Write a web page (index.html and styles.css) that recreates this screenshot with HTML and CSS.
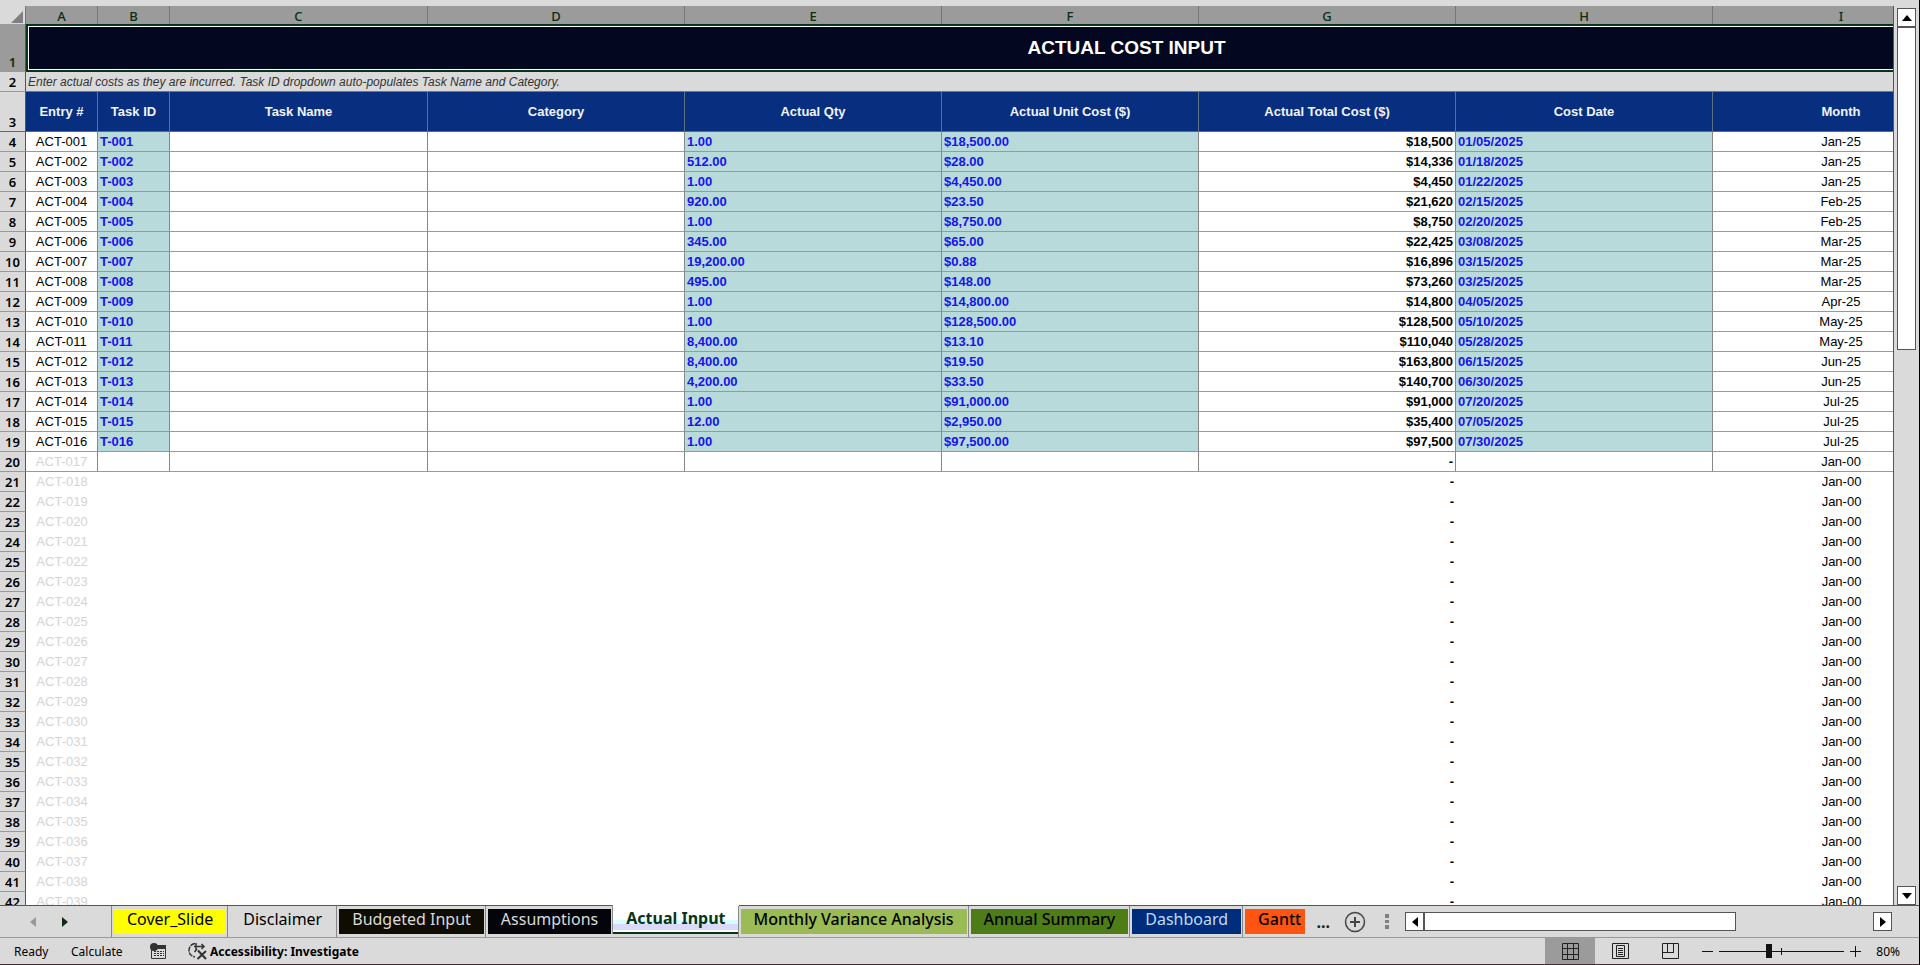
FILE: index.html
```html
<!DOCTYPE html>
<html lang="en">
<head>
    <meta charset="UTF-8">
    <meta name="viewport" content="width=device-width, initial-scale=1.0">
    <title>Actual Cost Input</title>
    <link rel="stylesheet" href="styles.css">
</head>
<body>
    <div class="workbook">
        <div class="main">
            <div class="sheet">
                <table class="grid">
                    <colgroup>
                        <col class="col-num">
                        <col class="col-id">
                        <col class="col-id">
                        <col class="col-name">
                        <col class="col-wide" span="7">
                    </colgroup>
                    <thead>
                        <tr class="letters">
                            <th class="corner"><svg width="12" height="12" viewBox="0 0 12 12"><path d="M12 0V12H0Z" fill="#808080"/></svg></th>
                            <th>A</th><th>B</th><th>C</th><th>D</th><th>E</th><th>F</th><th>G</th><th>H</th><th>I</th><th></th>
                        </tr>
                    </thead>
                    <tbody id="rows">
                        <tr class="title-row">
                            <th class="num active">1</th>
                            <td colspan="10">ACTUAL COST INPUT</td>
                        </tr>
                        <tr class="note-row">
                            <th class="num">2</th>
                            <td colspan="10">Enter actual costs as they are incurred. Task ID dropdown auto-populates Task Name and Category.</td>
                        </tr>
                        <tr class="head-row">
                            <th class="num">3</th>
                            <th>Entry #</th><th>Task ID</th><th>Task Name</th><th>Category</th><th>Actual Qty</th>
                            <th>Actual Unit Cost ($)</th><th>Actual Total Cost ($)</th><th>Cost Date</th><th>Month</th><th></th>
                        </tr>
                    </tbody>
                </table>
            </div>
            <div class="vscroll">
                <button class="arrow" aria-label="Scroll up"><svg width="10" height="6" viewBox="0 0 10 6"><path d="M5 0L10 6H0Z"/></svg></button>
                <div class="thumb"></div>
                <button class="arrow down" aria-label="Scroll down"><svg width="10" height="6" viewBox="0 0 10 6"><path d="M0 0H10L5 6Z"/></svg></button>
            </div>
        </div>

        <div class="tabbar">
            <div class="tab-nav">
                <button aria-label="Previous sheet"><svg width="6" height="10" viewBox="0 0 6 10"><path d="M6 0V10L0 5Z" fill="#999"/></svg></button>
                <button aria-label="Next sheet"><svg width="6" height="10" viewBox="0 0 6 10"><path d="M0 0V10L6 5Z" fill="#0b2b12"/></svg></button>
            </div>
            <div class="tabs">
                <button class="tab yellow">Cover_Slide</button>
                <button class="tab">Disclaimer</button>
                <button class="tab olive">Budgeted Input</button>
                <button class="tab black">Assumptions</button>
                <button class="tab current">Actual Input</button>
                <button class="tab lime">Monthly Variance Analysis</button>
                <button class="tab green">Annual Summary</button>
                <button class="tab navy">Dashboard</button>
                <button class="tab orange">Gantt</button>
            </div>
            <button class="more" aria-label="More sheets">...</button>
            <button class="add" aria-label="New sheet"><svg width="22" height="22" viewBox="0 0 22 22" fill="none" stroke="#444"><circle cx="11" cy="11" r="9.5" stroke-width="1.5"/><path d="M11 6V16M6 11H16" stroke-width="2"/></svg></button>
            <svg class="grip" width="4" height="15" viewBox="0 0 4 15" fill="#808080"><path d="M0 0H4V4H0ZM0 6H4V9H0ZM0 11H4V15H0Z"/></svg>
            <div class="hscroll">
                <button class="arrow" aria-label="Scroll left"><svg width="6" height="10" viewBox="0 0 6 10"><path d="M6 0V10L0 5Z"/></svg></button>
                <div class="thumb"></div>
                <button class="arrow right" aria-label="Scroll right"><svg width="6" height="10" viewBox="0 0 6 10"><path d="M0 0V10L6 5Z"/></svg></button>
            </div>
        </div>

        <div class="status">
            <span class="ready">Ready</span>
            <span class="calc">Calculate</span>
            <button class="macro" aria-label="Record macro"><svg width="16" height="16" viewBox="0 0 16 16"><path d="M4 2.5H15.5V15.5H1.500V7" fill="none" stroke="#333"/><path d="M6 2H16V6H6Z" fill="#333"/><circle cx="4" cy="4" r="4" fill="#333"/><path d="M4 8.500H14M4 10.500H14M4 12.500H14" stroke="#333" stroke-dasharray="2 1"/></svg></button>
            <button class="access">
                <svg width="20" height="18" viewBox="0 0 20 18" fill="none" stroke="#333"><path d="M7 1.500C3 2 1 5 1 8.500S3.500 14.500 7 15" stroke-width="1.500" stroke-dasharray="5 1"/><path d="M8 1V8M6 4.500H16M13.500 2L16 4.500L13.500 7M6.500 10L9 7" stroke-width="1.500"/><path d="M10 8.500L18 17M18 9L9.500 17" stroke-width="2"/></svg>
                Accessibility: Investigate
            </button>
            <div class="views">
                <button class="on" aria-label="Normal view"><svg width="17" height="17" viewBox="0 0 17 17" fill="none" stroke="#222"><path d="M.5 .5H16.500V16.500H.5ZM5.500 0V17M11.500 0V17M0 5.500H17M0 11.500H17"/></svg></button>
                <button aria-label="Page layout"><svg width="17" height="16" viewBox="0 0 17 16" fill="none" stroke="#222"><path d="M.5 .5H16.500V15.500H.5ZM4.500 2.500H12.500V13.500H4.500ZM6 5.500H11M6 7.500H11M6 9.500H11M6 11.500H11"/></svg></button>
                <button aria-label="Page break preview"><svg width="17" height="16" viewBox="0 0 17 16" fill="none" stroke="#222"><path d="M.5 .5H16.500V15.500H.5ZM5.500 1V9.500H11.500M11.500 1V10M0 9.500H6"/></svg></button>
            </div>
            <div class="zoom">
                <button aria-label="Zoom out"><svg width="11" height="11" viewBox="0 0 11 11"><path d="M0 5.500H11" stroke="#111"/></svg></button>
                <input type="range" min="10" max="190" value="81" aria-label="Zoom">
                <button aria-label="Zoom in"><svg width="11" height="11" viewBox="0 0 11 11"><path d="M0 5.500H11M5.500 0V11" stroke="#111"/></svg></button>
                <span class="percent">80%</span>
            </div>
        </div>
    </div>

    <script src="script.js"></script>
</body>
</html>
```

FILE: styles.css
```css
* {
    box-sizing: border-box;
}
body {
    margin: 0;
    background-color: #dadada;
    font-family: "Liberation Sans", Arial, sans-serif;
    font-size: 13px;
    color: #000;
}
button {
    margin: 0;
    padding: 0;
    border: 0;
    background: none;
    font: inherit;
    color: inherit;
    display: flex;
    align-items: center;
    justify-content: center;
}
.workbook {
    height: 100vh;
    display: flex;
    flex-direction: column;
    overflow: hidden;
    border-right: 1px solid #000;
    border-bottom: 1px solid #442a33;
}
.main {
    flex: 1;
    min-height: 0;
    display: flex;
    padding-top: 6px;
    border-bottom: 1px solid #555;
}

/* Grid */
.sheet {
    flex: 1;
    min-width: 0;
    overflow: hidden;
    background-color: #fff;
    border-right: 1px solid #555;
}
.grid {
    table-layout: fixed;
    width: 2227px;
    border-collapse: separate;
    border-spacing: 0;
}
.col-num {
    width: 26px;
}
.col-id {
    width: 72px;
}
.col-name {
    width: 258px;
}
.col-wide {
    width: 257px;
}
.grid th,
.grid td {
    height: 20px;
    padding: 0 2px;
    line-height: 18px;
    white-space: nowrap;
    overflow: hidden;
}
.grid .letters th {
    height: 18px;
    padding: 2px 0 0;
    line-height: 16px;
    background-color: #9b9b9b;
    border-right: 1px solid #777;
    font-family: "Noto Sans", sans-serif;
    font-weight: 500;
    color: #0b2b12;
}
.grid .letters .corner {
    padding: 3px 2px 0 0;
    background-color: #dadada;
    text-align: right;
    line-height: 0;
}
.grid .num {
    padding: 0;
    background-color: #dadada;
    border-right: 1px solid #555;
    border-bottom: 1px solid #999;
    font-family: "Noto Sans", sans-serif;
    font-weight: 600;
    vertical-align: bottom;
}
.grid .num.active {
    background-color: #9b9b9b;
    color: #0b2b12;
}
.grid .title-row td {
    height: 48px;
    background-color: #030720;
    border: 2px solid #06351a;
    box-shadow: inset 0 0 0 1px #fff;
    text-align: center;
    font-size: 19px;
    font-weight: bold;
    color: #fff;
}
.grid .note-row td {
    height: 19px;
    background-color: #dadada;
    border-bottom: 1px solid #777;
    font-size: 12px;
    font-style: italic;
    color: #333;
}
.grid .head-row th {
    height: 40px;
    border-bottom: 1px solid #666;
}
.grid .head-row th:not(.num) {
    background-color: #072e7f;
    border-right: 1px solid #5c7480;
    color: #f0f4fa;
}
.entry td {
    border-right: 1px solid #888;
    border-bottom: 1px solid #999;
    font-weight: bold;
}
.entry .input {
    background-color: #b8dada;
    color: #1414f0;
}
.grid .id {
    text-align: center;
    font-weight: normal;
}
.pending .id {
    color: #d4d4d4;
}
.spare td {
    font-weight: bold;
}
.total {
    text-align: right;
}
.grid .month {
    text-align: center;
    font-weight: normal;
}

/* Scroll bars */
.arrow,
.thumb {
    background-color: #fff;
    border: 1px solid #555;
}
.arrow {
    width: 19px;
    height: 19px;
    flex: none;
}
.vscroll {
    width: 25px;
    display: flex;
    flex-direction: column;
    align-items: center;
    padding-top: 2px;
}
.vscroll .thumb {
    width: 19px;
    height: 36%;
}
.down,
.right {
    margin-top: auto;
}
.right {
    margin: 0 0 0 auto;
}

/* Sheet tabs */
.tabbar {
    flex: none;
    height: 31px;
    display: flex;
    font-family: "Noto Sans", sans-serif;
    font-size: 16px;
}
.tab-nav {
    width: 112px;
    display: flex;
    gap: 26px;
    padding-left: 30px;
}
.tabs {
    display: flex;
}
.tab {
    height: 31px;
    padding: 0 13px 5px;
    border: 2px solid #dadada;
    border-top-width: 3px;
    border-bottom-width: 3px;
    box-shadow: -1px 0 0 #888;
    line-height: 20px;
    white-space: nowrap;
}
.yellow {
    background-color: #ff0;
}
.olive {
    background-color: #0f0d03;
    color: #dadada;
}
.black {
    background-color: #03050a;
    color: #dadada;
}
.current {
    height: 29px;
    margin-top: -1px;
    padding-top: 3px;
    border: 0;
    border-bottom: 2px solid #0b3318;
    background: linear-gradient(#fff 55%, #d6ffff 55%, #d6ffff 72%, #d9d9fb 72%, #d9d9fb 94%, #fff 94%);
    font-weight: bold;
    color: #0b3318;
}
.lime {
    background-color: #9bbb55;
    font-weight: 500;
}
.green {
    background-color: #4e7d18;
    font-weight: 500;
}
.navy {
    background-color: #002c7c;
    color: #bfdcf5;
}
.orange {
    padding-right: 4px;
    background-color: #ff5510;
    font-weight: 500;
}
.more {
    width: 32px;
    font-weight: bold;
    color: #0b2b12;
}
.add {
    width: 32px;
}
.grip {
    margin: 8px 16px 0 14px;
}
.hscroll {
    flex: 1;
    display: flex;
    align-items: center;
    padding-right: 27px;
}
.hscroll .thumb {
    width: 64%;
    height: 19px;
}

/* Status bar */
.status {
    flex: none;
    height: 27px;
    display: flex;
    align-items: center;
    border-top: 1px solid #999;
    font-family: "Noto Sans", sans-serif;
    font-size: 12px;
}
.ready {
    width: 57px;
    margin-left: 14px;
}
.calc {
    width: 79px;
}
.macro {
    width: 16px;
}
.access {
    gap: 2px;
    margin-left: 22px;
    font-weight: bold;
}
.views {
    display: flex;
    align-self: stretch;
    margin-left: auto;
}
.views button {
    width: 50px;
}
.views .on {
    background-color: #9b9b9b;
}
.zoom {
    display: flex;
    align-items: center;
    gap: 6px;
    padding: 0 19px 0 7px;
}
.zoom input {
    appearance: none;
    width: 125px;
    height: 16px;
    margin: 0;
    background: linear-gradient(#111, #111) center / 1px 7px no-repeat, linear-gradient(#111, #111) center / 100% 1px no-repeat;
}
.zoom input::-webkit-slider-thumb {
    appearance: none;
    width: 6px;
    height: 14px;
    background-color: #111;
}
.percent {
    margin-left: 9px;
}
```

FILE: script.js
```js
const entries = [
    ['T-001', '1.00', '$18,500.00', '$18,500', '01/05/2025', 'Jan-25'],
    ['T-002', '512.00', '$28.00', '$14,336', '01/18/2025', 'Jan-25'],
    ['T-003', '1.00', '$4,450.00', '$4,450', '01/22/2025', 'Jan-25'],
    ['T-004', '920.00', '$23.50', '$21,620', '02/15/2025', 'Feb-25'],
    ['T-005', '1.00', '$8,750.00', '$8,750', '02/20/2025', 'Feb-25'],
    ['T-006', '345.00', '$65.00', '$22,425', '03/08/2025', 'Mar-25'],
    ['T-007', '19,200.00', '$0.88', '$16,896', '03/15/2025', 'Mar-25'],
    ['T-008', '495.00', '$148.00', '$73,260', '03/25/2025', 'Mar-25'],
    ['T-009', '1.00', '$14,800.00', '$14,800', '04/05/2025', 'Apr-25'],
    ['T-010', '1.00', '$128,500.00', '$128,500', '05/10/2025', 'May-25'],
    ['T-011', '8,400.00', '$13.10', '$110,040', '05/28/2025', 'May-25'],
    ['T-012', '8,400.00', '$19.50', '$163,800', '06/15/2025', 'Jun-25'],
    ['T-013', '4,200.00', '$33.50', '$140,700', '06/30/2025', 'Jun-25'],
    ['T-014', '1.00', '$91,000.00', '$91,000', '07/20/2025', 'Jul-25'],
    ['T-015', '12.00', '$2,950.00', '$35,400', '07/05/2025', 'Jul-25'],
    ['T-016', '1.00', '$97,500.00', '$97,500', '07/30/2025', 'Jul-25']
];

const rows = document.getElementById('rows');

for (let i = 1; i <= 39; i++) {
    const entry = entries[i - 1];
    const [task, qty, unit, total, date, month] = entry || ['', '', '', '-', '', 'Jan-00'];
    const input = entry ? 'input' : '';
    const tr = document.createElement('tr');

    // the first unused row still has its borders
    tr.className = i <= 17 ? 'entry' : 'spare';
    if (!entry) {
        tr.classList.add('pending');
    }
    tr.innerHTML = `
        <th class="num">${i + 3}</th>
        <td class="id">ACT-${String(i).padStart(3, '0')}</td>
        <td class="${input}">${task}</td>
        <td></td>
        <td></td>
        <td class="${input}">${qty}</td>
        <td class="${input}">${unit}</td>
        <td class="total">${total}</td>
        <td class="${input}">${date}</td>
        <td class="month">${month}</td>
        <td></td>`;
    rows.appendChild(tr);
}
```
